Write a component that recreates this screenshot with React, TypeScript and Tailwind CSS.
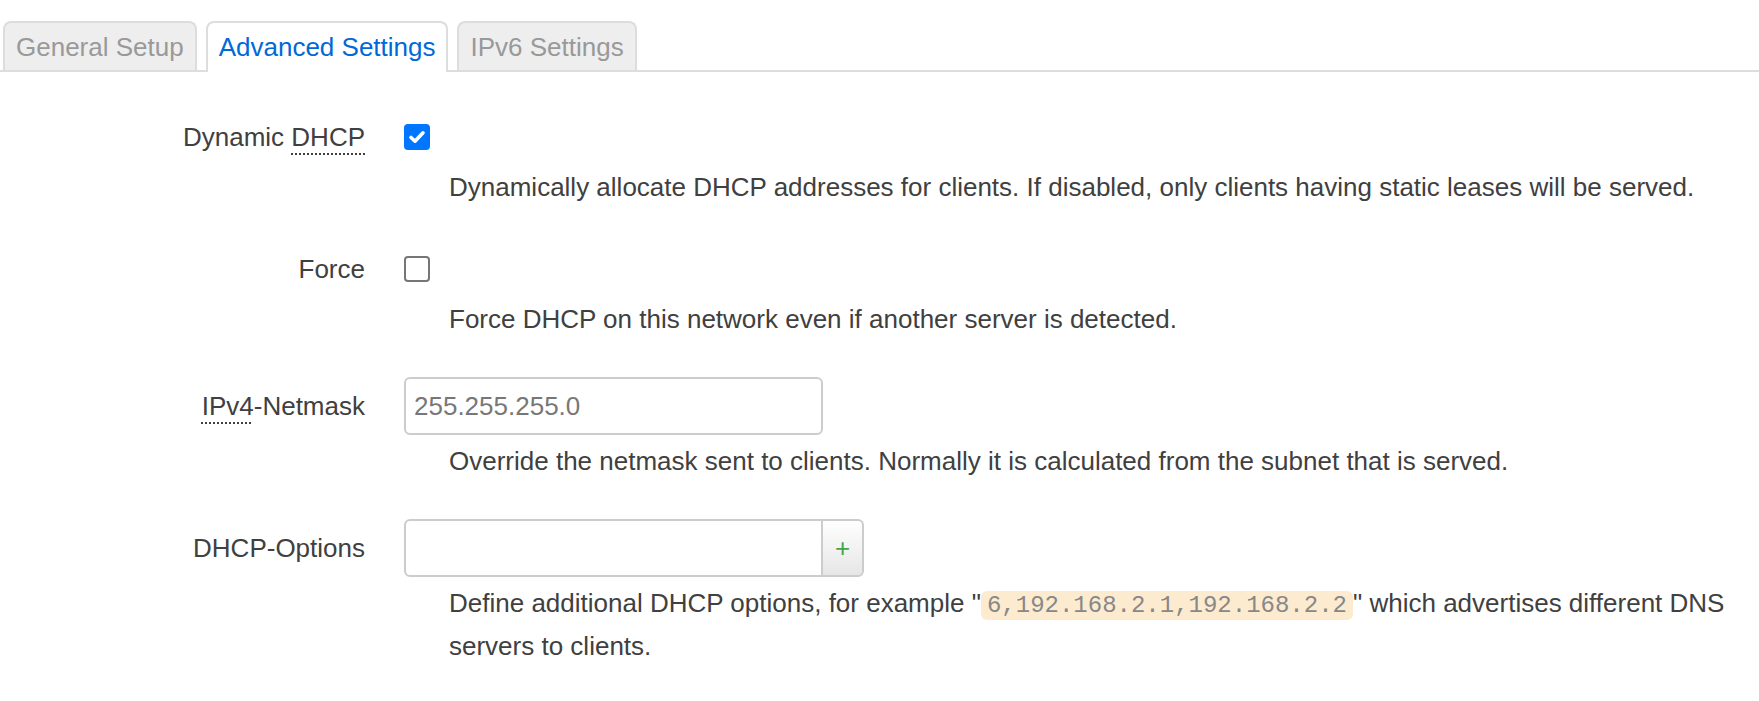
import { ReactNode } from "react";

const font = { fontFamily: '"Liberation Sans", Arial, sans-serif' };

const Tab = ({ label, active }: { label: string; active?: boolean }) => (
  <div
    className={
      active
        ? "-mb-[2px] h-[51px] rounded-t-[8px] border-2 border-b-0 border-[#ddd] bg-white px-[11px] pt-[4px] text-[26px] leading-[40px] text-[#0069d6]"
        : "h-[49px] rounded-t-[8px] border-2 border-b-0 border-[#ddd] bg-[#eee] px-[11px] pt-[4px] text-[26px] leading-[40px] text-[#999]"
    }
  >
    {label}
  </div>
);

const Checkbox = ({ checked }: { checked?: boolean }) =>
  checked ? (
    <span className="flex h-[26px] w-[26px] items-center justify-center rounded-[4px] bg-[#0075ff]">
      <svg width="20" height="20" viewBox="0 0 20 20" fill="none">
        <path
          d="M4 10.5 L8 14.2 L16 5.8"
          stroke="white"
          strokeWidth="3.6"
          strokeLinecap="round"
          strokeLinejoin="round"
        />
      </svg>
    </span>
  ) : (
    <span className="block h-[26px] w-[26px] rounded-[4px] border-2 border-[#767676] bg-white" />
  );

const Abbr = ({ children }: { children: ReactNode }) => (
  <span className="underline decoration-dotted decoration-[#404040] decoration-2 underline-offset-[7px]">
    {children}
  </span>
);

const Row = ({
  label,
  control,
  height,
  children,
}: {
  label: ReactNode;
  control: ReactNode;
  height: string;
  children: ReactNode;
}) => (
  <div className="flex">
    <div
      className={`flex w-[365px] shrink-0 items-center justify-end text-[26px] leading-[40px] text-[#404040] ${height}`}
    >
      {label}
    </div>
    <div className="ml-[39px] flex-1 pr-[20px]">
      <div className={`flex items-center ${height}`}>{control}</div>
      <div className="mt-[6px] pl-[45px] text-[26px] leading-[41px] text-[#404040]">
        {children}
      </div>
    </div>
  </div>
);

export default function App() {
  return (
    <div className="min-h-[701px] w-full bg-white" style={font}>
      <div className="pt-[21px]">
        <div className="flex items-end gap-[9px] border-b-2 border-[#ddd] pl-[3px]">
          <Tab label="General Setup" />
          <Tab label="Advanced Settings" active />
          <Tab label="IPv6 Settings" />
        </div>
      </div>

      <div className="flex flex-col gap-[37px] pt-[41px]">
        <Row
          height="h-[48px]"
          label={
            <span>
              Dynamic <Abbr>DHCP</Abbr>
            </span>
          }
          control={<Checkbox checked />}
        >
          Dynamically allocate DHCP addresses for clients. If disabled, only
          clients having static leases will be served.
        </Row>

        <Row height="h-[48px]" label="Force" control={<Checkbox />}>
          Force DHCP on this network even if another server is detected.
        </Row>

        <Row
          height="h-[58px]"
          label={
            <span>
              <Abbr>IPv4</Abbr>-Netmask
            </span>
          }
          control={
            <input
              readOnly
              placeholder="255.255.255.0"
              className="h-[58px] w-[419px] rounded-[6px] border-2 border-[#ccc] bg-white px-[8px] text-[26px] text-[#404040] outline-none placeholder:text-[#777]"
              style={font}
            />
          }
        >
          Override the netmask sent to clients. Normally it is calculated from
          the subnet that is served.
        </Row>

        <Row
          height="h-[58px]"
          label="DHCP-Options"
          control={
            <div className="flex h-[58px] w-[460px]">
              <input
                readOnly
                className="h-[58px] flex-1 rounded-l-[6px] border-2 border-[#ccc] bg-white px-[8px] text-[26px] outline-none"
                style={font}
              />
              <div className="-ml-[2px] flex h-[58px] w-[43px] items-center justify-center rounded-r-[6px] border-2 border-[#ccc] bg-gradient-to-b from-white to-[#e6e6e6] text-[26px] text-[#46a546]">
                +
              </div>
            </div>
          }
        >
          Define additional DHCP options, for example "
          <code
            className="rounded-[6px] bg-[#fdebd0] px-[6px] py-[1px] text-[24px] text-[#888]"
            style={{ fontFamily: '"Liberation Mono", "Courier New", monospace' }}
          >
            6,192.168.2.1,192.168.2.2
          </code>
          " which advertises different DNS servers to clients.
        </Row>
      </div>
    </div>
  );
}
